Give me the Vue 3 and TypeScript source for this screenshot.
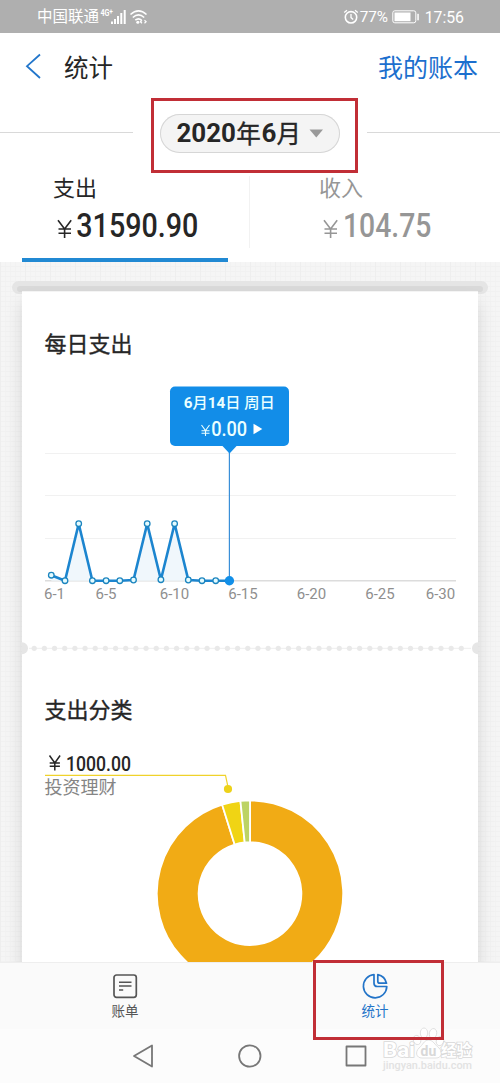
<script setup lang="ts">
const step = 13.7
const levels = [5.5, 0, 57, 0, 0, 0, 0.7, 57, 1, 57, 0.7, 0, 0, 0]
const points = levels.map((v, i) => ({ x: 29.3 + i * step, y: 288.7 - v }))
const line = points.map((p) => `${p.x},${p.y}`).join(' ')
const area = `${points[0].x},288.7 ${line} ${points[13].x},288.7`
const labels = [
  { t: '6-1', x: 32.5 }, { t: '6-5', x: 84 }, { t: '6-10', x: 152.5 }, { t: '6-15', x: 221 },
  { t: '6-20', x: 289.5 }, { t: '6-25', x: 358 }, { t: '6-30', x: 418.5 },
]
const dots = Array.from({ length: 43 }, (_, i) => 12.2 + i * 10.17)

const polar = (r: number, deg: number) => {
  const a = (deg * Math.PI) / 180
  return `${(228 + r * Math.sin(a)).toFixed(2)} ${(245.6 - r * Math.cos(a)).toFixed(2)}`
}
const slice = (from: number, to: number) => {
  const large = to - from > 180 ? 1 : 0
  return `M${polar(93.2, from)} A93.2 93.2 0 ${large} 1 ${polar(93.2, to)} L${polar(51.4, to)} A51.4 51.4 0 ${large} 0 ${polar(51.4, from)} Z`
}
const slices = [
  { d: slice(0, 342.6), c: '#f1ab15' },
  { d: slice(342.6, 354.1), c: '#f0d414' },
  { d: slice(354.1, 360), c: '#bcd364' },
]
</script>

<template>
  <div class="phone">
    <div class="status">
      <span class="carrier">中国联通</span>
      <svg class="signal" width="52" height="33" viewBox="0 0 52 33">
        <g fill="#fff" font-weight="700">
          <text x="1.5" y="15.7" font-size="8.8" textLength="9" lengthAdjust="spacingAndGlyphs">4G</text>
          <text x="10.3" y="13.5" font-size="6.5">+</text>
        </g>
        <g fill="#fff">
          <rect x="12" y="21.5" width="2" height="2.5" /><rect x="15" y="19" width="2" height="5" />
          <rect x="18" y="16" width="2" height="8" /><rect x="21.3" y="13" width="2" height="11" />
          <rect x="24.7" y="10" width="2" height="14" />
        </g>
        <g fill="none" stroke="#fff" stroke-width="1.6">
          <path d="M31.5 14.5Q39.5 7.3 47.5 14.5M33.8 17.5Q39.5 12.3 45.2 17.5M36.3 20.2Q39.5 17.5 42.5 20.2" />
          <path d="M43 20.3l-1.6 1.5 1.6 1.5M45.5 20.3l1.6 1.5-1.6 1.5" stroke-width="1.2" />
        </g>
        <circle cx="38.8" cy="22.2" r="1.5" fill="#fff" />
      </svg>
      <span class="grow"></span>
      <svg class="alarm" width="16" height="16" viewBox="0 0 16 16" fill="none" stroke="#fff" stroke-width="1.6">
        <circle cx="8" cy="8.3" r="5.7" /><path d="M8 5v3.6l2.2 1.8M1.2 3.5 4 1.2M14.8 3.5 12 1.2" stroke-width="1.3" />
      </svg>
      <span class="pct">77%</span>
      <svg class="battery" width="28" height="14" viewBox="0 0 28 14">
        <rect x=".8" y=".8" width="23" height="12" rx="2" fill="none" stroke="#fff" stroke-width="1" />
        <rect x="2.5" y="2.5" width="16" height="8.7" fill="#fff" /><rect x="25.3" y="3.8" width="1.5" height="6.5" fill="#fff" />
      </svg>
      <span class="clock">17:56</span>
    </div>

    <header class="header">
      <svg width="17" height="26" viewBox="0 0 17 26"><path d="M15 1.5 2 13.2 15 25" fill="none" stroke="#2276cb" stroke-width="1.8" /></svg>
      <span class="title">统计</span>
      <span class="grow"></span>
      <span class="link">我的账本</span>
    </header>

    <div class="month">
      <i class="rule"></i>
      <div class="pill">
        <svg width="180" height="39" viewBox="0 0 180 39">
          <g fill="#262626" font-weight="700" font-size="26">
            <text x="16.5" y="28.2" textLength="59.5" lengthAdjust="spacingAndGlyphs">2020</text>
            <text x="101.5" y="28.2">6</text>
          </g>
          <g fill="#262626" stroke="#262626" stroke-width=".4" font-size="24.5"><text x="76.3" y="28.6">年</text><text x="116.5" y="28.6">月</text></g>
          <path d="M149.5 15.5h13.5l-6.7 8z" fill="#999" />
        </svg>
      </div>
      <i class="rule"></i>
    </div>

    <div class="tabs">
      <div class="tab active">
        <span class="name">支出</span>
        <svg width="160" height="40" viewBox="0 -4 160 40" fill="#262626">
          <path d="M5 11.2 11.6 20 18.2 11.2M11.6 20V29M5.5 20h12.5M5.5 24.2h12.5" fill="none" stroke="#262626" stroke-width="1.6" />
          <text x="23.3" y="27.8" font-size="33.5" font-weight="500" textLength="122" lengthAdjust="spacingAndGlyphs">31590.90</text>
        </svg>
      </div>
      <i class="split"></i>
      <div class="tab">
        <span class="name">收入</span>
        <svg width="160" height="40" viewBox="0 -4 160 40" fill="#969696">
          <path d="M5 11.2 11.6 20 18.2 11.2M11.6 20V29M5.5 20h12.5M5.5 24.2h12.5" fill="none" stroke="#969696" stroke-width="1.6" />
          <text x="24" y="27.8" font-size="33.5" font-weight="500" textLength="88.5" lengthAdjust="spacingAndGlyphs">104.75</text>
        </svg>
      </div>
    </div>

    <main class="board">
      <div class="slot"><i></i></div>
      <div class="paper">
        <section class="daily">
          <svg width="456" height="356" viewBox="0 0 456 356">
            <text x="22.5" y="59.8" class="h">每日支出</text>
            <g stroke="#f1f1f1"><path d="M23 161.5h411M23 203.5h411M23 246.5h411" /></g>
            <path d="M23 288.7h411" stroke="#dcdcdc" stroke-width="1.5" />
            <polygon :points="area" fill="#f0f7fc" />
            <polyline :points="line" fill="none" stroke="#1c85cf" stroke-width="2.6" stroke-linejoin="round" />
            <path d="M207.4 160v128" stroke="#3a8fd8" stroke-width="1.2" />
            <circle v-for="p in points.slice(0, 13)" :key="p.x" :cx="p.x" :cy="p.y" r="2.8" fill="#e4fbff" stroke="#1c85bf" stroke-width="1.3" />
            <circle cx="207.4" cy="288.7" r="4.7" fill="#128fe8" />
            <text v-for="l in labels" :key="l.t" :x="l.x" y="306.8" font-size="15" fill="#8f8f8f" text-anchor="middle">{{ l.t }}</text>
            <rect x="148" y="94.5" width="119" height="59.5" rx="5" fill="#128de8" />
            <path d="M200 153.5h15l-7.5 8z" fill="#128de8" />
            <text x="161.7" y="115.5" font-size="15" font-weight="700" fill="#eaffff" textLength="91" lengthAdjust="spacingAndGlyphs">6<tspan class="thin">月</tspan>14<tspan class="thin">日 周日</tspan></text>
            <path d="M179.5 133 183.5 138.5 187.5 133M183.5 138.5V144M179.5 138.8h8M179.5 141.3h8" fill="none" stroke="#eaffff" stroke-width="1.1" />
            <text x="189.2" y="144" font-size="21" font-weight="500" fill="#eaffff" textLength="36" lengthAdjust="spacingAndGlyphs">0.00</text>
            <path d="M231.5 131.8v10.5l8.8-5.2z" fill="#fff" />
          </svg>
        </section>
        <svg class="perforation" width="456" height="14" viewBox="0 0 456 14">
          <path d="M7 7.3h442" stroke="#eee" stroke-width="1" />
          <circle v-for="x in dots" :key="x" :cx="x" cy="7.3" r="2.6" fill="#e9e9e9" />
          <circle cx="0" cy="7.3" r="6" fill="#e6e6e6" /><circle cx="456" cy="7.3" r="6" fill="#e6e6e6" />
        </svg>
        <section class="category">
          <svg width="456" height="307" viewBox="0 7 456 307">
            <text x="22.5" y="70.4" class="h">支出分类</text>
            <path d="M27.5 107.5 32.8 115 38.1 107.5M32.8 115V122.4M27.7 115h10.2M27.7 118.3h10.2" fill="none" stroke="#262626" stroke-width="1.5" />
            <text x="44" y="122.6" font-size="21" font-weight="500" fill="#262626" textLength="65" lengthAdjust="spacingAndGlyphs">1000.00</text>
            <path d="M23 127.4h180.5l2.8 13" fill="none" stroke="#f0d22b" stroke-width="1.2" />
            <circle cx="206" cy="141" r="4.1" fill="#edd21a" />
            <text x="22.5" y="146" font-size="18" fill="#858585">投资理财</text>
            <path v-for="s in slices" :key="s.c" :d="s.d" :fill="s.c" stroke="#fff" stroke-width="1.8" />
          </svg>
        </section>
      </div>
    </main>

    <nav class="bottom">
      <div class="item">
        <svg width="28" height="28" viewBox="0 0 28 28" fill="none" stroke="#555">
          <rect x="3" y="3" width="22.3" height="22.3" rx="2.5" stroke-width="1.7" />
          <path d="M8 10.2h12.5M8 14h12.5M8 18h4.2" stroke-width="1.5" />
        </svg>
        <span>账单</span>
      </div>
      <div class="item on">
        <svg width="28" height="28" viewBox="0 0 28 28" fill="none" stroke="#2374c8" stroke-width="1.7" stroke-linejoin="round">
          <path d="M13 2.5A11.7 11.7 0 1 0 25.8 14.5H16.3Q13 14.5 13 11.2Z" />
          <path d="M16.8 2.7V9.2Q16.8 11.2 18.8 11.2H25.5A11.4 11.4 0 0 0 16.8 2.7Z" />
        </svg>
        <span>统计</span>
      </div>
      <i class="mark mark-tab"></i>
    </nav>

    <footer class="system">
      <svg width="500" height="54" viewBox="0 0 500 54">
        <g fill="none" stroke="#777" stroke-width="1.8" stroke-linejoin="round">
          <path d="M134 27 152 16.5V37.5Z" /><circle cx="249.8" cy="27" r="10.7" /><rect x="346.5" y="17.5" width="19" height="19" />
        </g>
      </svg>
      <svg class="watermark" width="100" height="52" viewBox="0 0 100 52">
        <g fill="#fff" stroke="#dedede" stroke-width=".9">
          <ellipse cx="38" cy="17" rx="3.7" ry="4.7" transform="rotate(-20 38 17)" /><ellipse cx="45" cy="10" rx="3.7" ry="5" />
          <ellipse cx="54" cy="10.5" rx="3.7" ry="5" transform="rotate(12 54 10.5)" /><ellipse cx="61" cy="18" rx="3.7" ry="4.7" transform="rotate(20 61 18)" />
          <path d="M49.5 17C45 17 44 22 40 25 36 29 37 35 43 35H57C63 35 64 29 60 25 56 22 54 17 49.5 17Z" />
        </g>
        <g fill="#fff" stroke="#d8d8d8" stroke-width="1.6" paint-order="stroke" font-weight="700">
          <text x="4" y="34" font-size="21" textLength="32" lengthAdjust="spacingAndGlyphs">Bai</text>
          <text x="62" y="33" font-size="15.5" textLength="31" lengthAdjust="spacingAndGlyphs">经验</text>
        </g>
        <text x="41.5" y="33" font-size="14" font-weight="700" fill="#d8d8d8">du</text>
        <text x="4" y="46" font-size="11" fill="#e2e2e2" font-weight="500" textLength="89" lengthAdjust="spacingAndGlyphs">jingyan.baidu.com</text>
      </svg>
    </footer>
    <i class="mark mark-month"></i>
  </div>
</template>

<style>
body { margin: 0; background: #fafafa; }
</style>

<style scoped>
.phone { position: relative; width: 500px; height: 1083px; overflow: hidden; display: flex; flex-direction: column; background: #fff; font-family: Roboto, "Noto Sans CJK SC", sans-serif; color: #262626; }
.phone svg { display: block; flex: none; }
.grow { flex: 1; }
.status { height: 33px; flex: none; display: flex; align-items: center; background: #afafaf; color: #fff; padding: 0 36px 0 37px; font-size: 15.5px; line-height: 33px; }
.carrier { width: 62px; white-space: nowrap; padding-top: 2px; }
.alarm { margin-right: 1px; }
.pct { font-size: 15.3px; width: 29px; margin-right: 3px; padding-top: 1px; }
.battery { margin-right: 5px; }
.clock { font-size: 15.8px; padding-top: 1px; }
.header { height: 66px; flex: none; display: flex; align-items: center; padding: 0 22px 0 25px; box-sizing: border-box; }
.title { font-size: 24.5px; margin-left: 22px; line-height: 36px; padding-top: 5px; }
.link { font-size: 25px; color: #1c6fce; line-height: 36px; padding-top: 5px; }
.month { height: 69px; flex: none; display: flex; justify-content: space-between; align-items: center; }
.rule { width: 133px; height: 1px; background: #d9d9d9; margin-bottom: 2px; }
.pill { width: 180px; height: 39px; border-radius: 20px; background: #f4f4f4; box-shadow: inset 0 0 0 1px #d6d6d6; }
.tabs { height: 94px; flex: none; display: flex; }
.tab { width: 206px; height: 94px; box-sizing: border-box; padding: 5px 0 0 31px; margin-left: 22px; border-bottom: 4px solid transparent; color: #969696; }
.tab + .split + .tab { margin-left: 38px; }
.active { border-color: #2189d3; color: #262626; }
.name { display: block; font-size: 22px; line-height: 32px; height: 32px; }
.split { width: 1px; height: 72px; margin: 8px 0 0 21px; background: #f2f2f2; }
.board { height: 700px; flex: none; overflow: hidden; box-sizing: border-box; padding-top: 19px; background: repeating-linear-gradient(90deg, #eeeeee 0 1px, transparent 1px 25px), repeating-linear-gradient(0deg, #f1f1f1 0 1px, transparent 1px 5px), repeating-linear-gradient(90deg, #f2f2f2 0 1px, #f5f5f5 1px 5px); }
.slot { width: 476px; height: 13px; margin: 0 auto; border-radius: 7px; background: #e5e5e5; box-sizing: border-box; padding: 5px 5px 0; }
.slot i { display: block; height: 6px; border-radius: 3px; background: #d9d9d9; }
.paper { width: 456px; margin: -3px auto 0; position: relative; background: #fff; box-shadow: 0 12px 16px rgba(0, 0, 0, .13); border-top: 1px solid #f4f4f4; box-sizing: border-box; }
.daily { height: 349px; overflow: hidden; }
.h { font-size: 22px; fill: #262626; stroke: #262626; stroke-width: .35px; }
.thin { font-weight: 500; }
.bottom { position: relative; height: 67px; flex: none; display: flex; background: #fafafa; border-top: 1px solid #eee; box-sizing: border-box; }
.item { width: 50%; display: flex; flex-direction: column; align-items: center; padding-top: 9px; font-size: 13.5px; line-height: 20px; color: #555; }
.item span { margin-top: 1px; }
.on { color: #2374c8; }
.system { position: relative; height: 54px; flex: none; background: #fcfcfc; }
.watermark { position: absolute; left: 379px; top: -6px; }
.mark { position: absolute; border: 3px solid #c12e36; box-sizing: border-box; z-index: 2; }
.mark-month { left: 151px; top: 98px; width: 207px; height: 75px; }
.mark-tab { left: 313px; top: -3px; width: 131px; height: 80px; }
</style>
